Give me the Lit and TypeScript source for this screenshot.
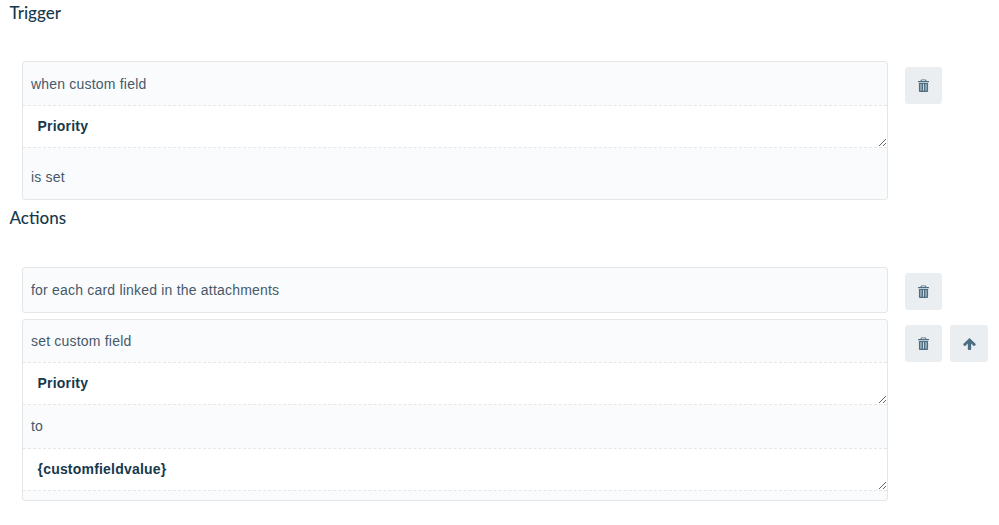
import { LitElement, html, css } from "lit";
import { customElement } from "lit/decorators.js";

const trash = html`<svg class="ic" width="11" height="13" viewBox="0 0 12 14">
  <path fill="currentColor" fill-rule="evenodd" d="M4 .4h4c.5 0 .9.3 1 .8l.4 1H11.600c.2 0 .4.2.4.4v.9H0v-.9c0-.2.2-.4.4-.4H2.600l.4-1c.1-.5.5-.8 1-.8zM4.200 1.400l-.3.8h4.200l-.3-.8zM1 4.300h10v8.300c0 .8-.6 1.400-1.300 1.400H2.300C1.600 14 1 13.400 1 12.600zM2.800 5.400v7.200h.9V5.400zM5.550 5.400v7.200h.9V5.400zM8.300 5.400v7.200h.9V5.400z"/>
</svg>`;
const up = html`<svg class="ic" width="13" height="12" viewBox="0 0 14 13">
  <path fill="currentColor" d="M7 .4c.3 0 .6.1.8.3l5.700 5.600c.4.400.4 1 0 1.400l-.8.8c-.4.4-1 .4-1.400 0L8.800 5.900v6c0 .6-.4 1-1 1H6.200c-.6 0-1-.4-1-1v-6L2.700 8.500c-.4.4-1 .4-1.400 0l-.8-.8c-.4-.4-.4-1 0-1.400L6.200.7C6.400.5 6.700.4 7 .4z"/>
</svg>`;

@customElement("app-root")
export class AppRoot extends LitElement {
  static styles = css`
    :host { display: block; width: 999px; height: 525px; overflow: hidden; background: #fff; color: #17394d; font-family: "Liberation Sans", Arial, sans-serif; font-size: 14px; letter-spacing: 0.2px; }
    h3 { margin: 0; padding-left: 9.500px; font: 500 17px/26px Lato, "Noto Sans", sans-serif; letter-spacing: 0; color: #17394d; }
    .t1 { margin-bottom: 35px; }
    .t2 { margin-top: 5px; margin-bottom: 36px; }
    .rule { display: flex; align-items: flex-start; gap: 17px; padding-left: 22px; margin-bottom: 6px; }
    .rule.tight { margin-bottom: 0; }
    .card { box-sizing: border-box; width: 866px; flex: none; background: #fafbfd; border: 1px solid #e4e6e8; border-radius: 3px; display: flex; flex-direction: column; }
    .line { color: #46596a; padding-left: 8px; display: flex; align-items: center; line-height: 16px; }
    .h43 { height: 43px; }
    .h43b { height: 43px; padding-bottom: 2px; box-sizing: border-box; }
    .h44 { height: 44px; }
    .h42 { height: 42px; }
    .h51 { height: 51px; padding-top: 7px; box-sizing: border-box; }
    textarea { display: block; box-sizing: border-box; width: 100%; height: 43px; margin: 0; padding: 12px 14.500px; border: none; border-top: 1px dashed #e4e6e8; border-bottom: 1px dashed #e4e6e8; background: #fff; color: #17394d; font: bold 14px/17px "Liberation Sans", Arial, sans-serif; letter-spacing: 0.2px; outline: none; resize: vertical; }
    .tail { height: 9px; }
    .acts { display: flex; gap: 8px; }
    .acts.m7 { margin-top: 6px; }
    .btn { box-sizing: border-box; width: 37px; height: 37px; border: none; padding: 0; background: #ebeef0; border-radius: 3px; color: #4d6d82; display: flex; align-items: center; justify-content: center; }
    .btn.w38 { width: 38px; }
    .ic { display: block; }
  `;

  render() {
    return html`
      <h3 class="t1">Trigger</h3>
      <div class="rule tight">
        <div class="card">
          <div class="line h43">when custom field</div>
          <textarea>Priority</textarea>
          <div class="line h51">is set</div>
        </div>
        <div class="acts m7"><button class="btn">${trash}</button></div>
      </div>
      <h3 class="t2">Actions</h3>
      <div class="rule">
        <div class="card">
          <div class="line h44">for each card linked in the attachments</div>
        </div>
        <div class="acts m7"><button class="btn">${trash}</button></div>
      </div>
      <div class="rule tight">
        <div class="card">
          <div class="line h42">set custom field</div>
          <textarea>Priority</textarea>
          <div class="line h43b">to</div>
          <textarea>{customfieldvalue}</textarea>
          <div class="tail"></div>
        </div>
        <div class="acts m7">
          <button class="btn">${trash}</button>
          <button class="btn w38">${up}</button>
        </div>
      </div>
    `;
  }
}
